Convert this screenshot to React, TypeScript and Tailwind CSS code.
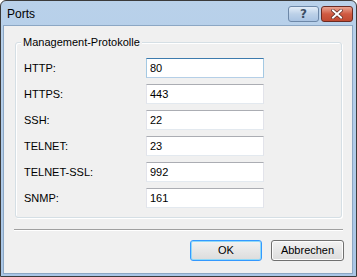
import React from "react";

const rows: [string, string][] = [
  ["HTTP:", "80"],
  ["HTTPS:", "443"],
  ["SSH:", "22"],
  ["TELNET:", "23"],
  ["TELNET-SSL:", "992"],
  ["SNMP:", "161"],
];

export default function App() {
  return (
    <div
      className="w-[357px] h-[277px] flex flex-col border border-[#3b3b3b] rounded-t-[6px] overflow-hidden bg-gradient-to-b from-[#b9d1ea] to-[#a9c6e6]"
      style={{ fontFamily: '"Liberation Sans", Arial, sans-serif' }}
    >
      {/* title bar */}
      <div className="h-[24px] flex items-start shrink-0 relative">
        <div className="pl-[6px] pt-[6px] text-[12px] leading-[14px] text-black">Ports</div>
        <div className="ml-auto mr-[3px] mt-[5px] flex gap-[2px]">
          <div className="w-[31px] h-[16px] rounded-[3px] border border-[#6d88a8] bg-gradient-to-b from-[#e3edf8] via-[#bcd1e8] to-[#a9c3e2] flex items-center justify-center">
            <span className="text-[12px] font-bold leading-none text-[#3d4f63]" style={{ fontFamily: '"DejaVu Sans", sans-serif' }}>?</span>
          </div>
          <div className="w-[32px] h-[16px] rounded-[3px] border border-[#6b2a22] bg-gradient-to-b from-[#e8a493] via-[#cf5a42] to-[#c04a32] flex items-center justify-center">
            <svg width="12" height="10" viewBox="0 0 12 10">
              <path d="M2 1.5 L10 8.5 M10 1.5 L2 8.5" stroke="#5b2a24" strokeWidth="3.4" strokeLinecap="square" />
              <path d="M2 1.5 L10 8.5 M10 1.5 L2 8.5" stroke="#ffffff" strokeWidth="2" strokeLinecap="square" />
            </svg>
          </div>
        </div>
      </div>
      {/* client */}
      <div className="flex-1 ml-[2px] mr-[3px] mb-[2px] border border-[#8ca7c4] bg-[#f0f0f0] flex flex-col text-[11px] text-black">
        <div className="mt-[16px] ml-[11px] w-[327px] h-[176px] relative border border-[#d5dfe5] rounded-[3px] shadow-[inset_1px_1px_0_#ffffff,1px_1px_0_#ffffff]">
          <div className="absolute left-[5px] top-[-7px] px-[2px] bg-[#f0f0f0] leading-[13px]">Management-Protokolle</div>
          <div className="pt-[15px] flex flex-col gap-[6px]">
            {rows.map(([label, value], i) => (
              <div key={label} className="flex items-center h-[20px]">
                <div className="ml-[8px] w-[122px]">{label}</div>
                <div
                  className={
                    "w-[118px] h-[20px] bg-white border flex items-center pl-[3px] " +
                    (i === 0
                      ? "border-[#a4c9e3] border-t-[#3d7bad] border-b-[#b5cfe7]"
                      : "border-[#e2e3ea] border-t-[#abadb3] border-b-[#e3e9ef]")
                  }
                >
                  {value}
                </div>
              </div>
            ))}
          </div>
        </div>
        <div className="mt-[11px] ml-[10px] w-[329px] h-[2px] border-t border-[#a0a0a0] border-b border-b-white" />
        <div className="mt-[9px] mr-[8px] flex justify-end gap-[9px]">
          <div className="w-[72px] h-[21px] rounded-[3px] border border-[#3399ff] shadow-[inset_0_0_0_1px_#8fd9f8] bg-gradient-to-b from-[#f2f2f2] to-[#dcdcdc] flex items-center justify-center">
            OK
          </div>
          <div className="w-[73px] h-[21px] rounded-[3px] border border-[#707070] bg-gradient-to-b from-[#f2f2f2] to-[#dcdcdc] shadow-[inset_0_0_0_1px_#fcfcfc] flex items-center justify-center">
            Abbrechen
          </div>
        </div>
      </div>
    </div>
  );
}
